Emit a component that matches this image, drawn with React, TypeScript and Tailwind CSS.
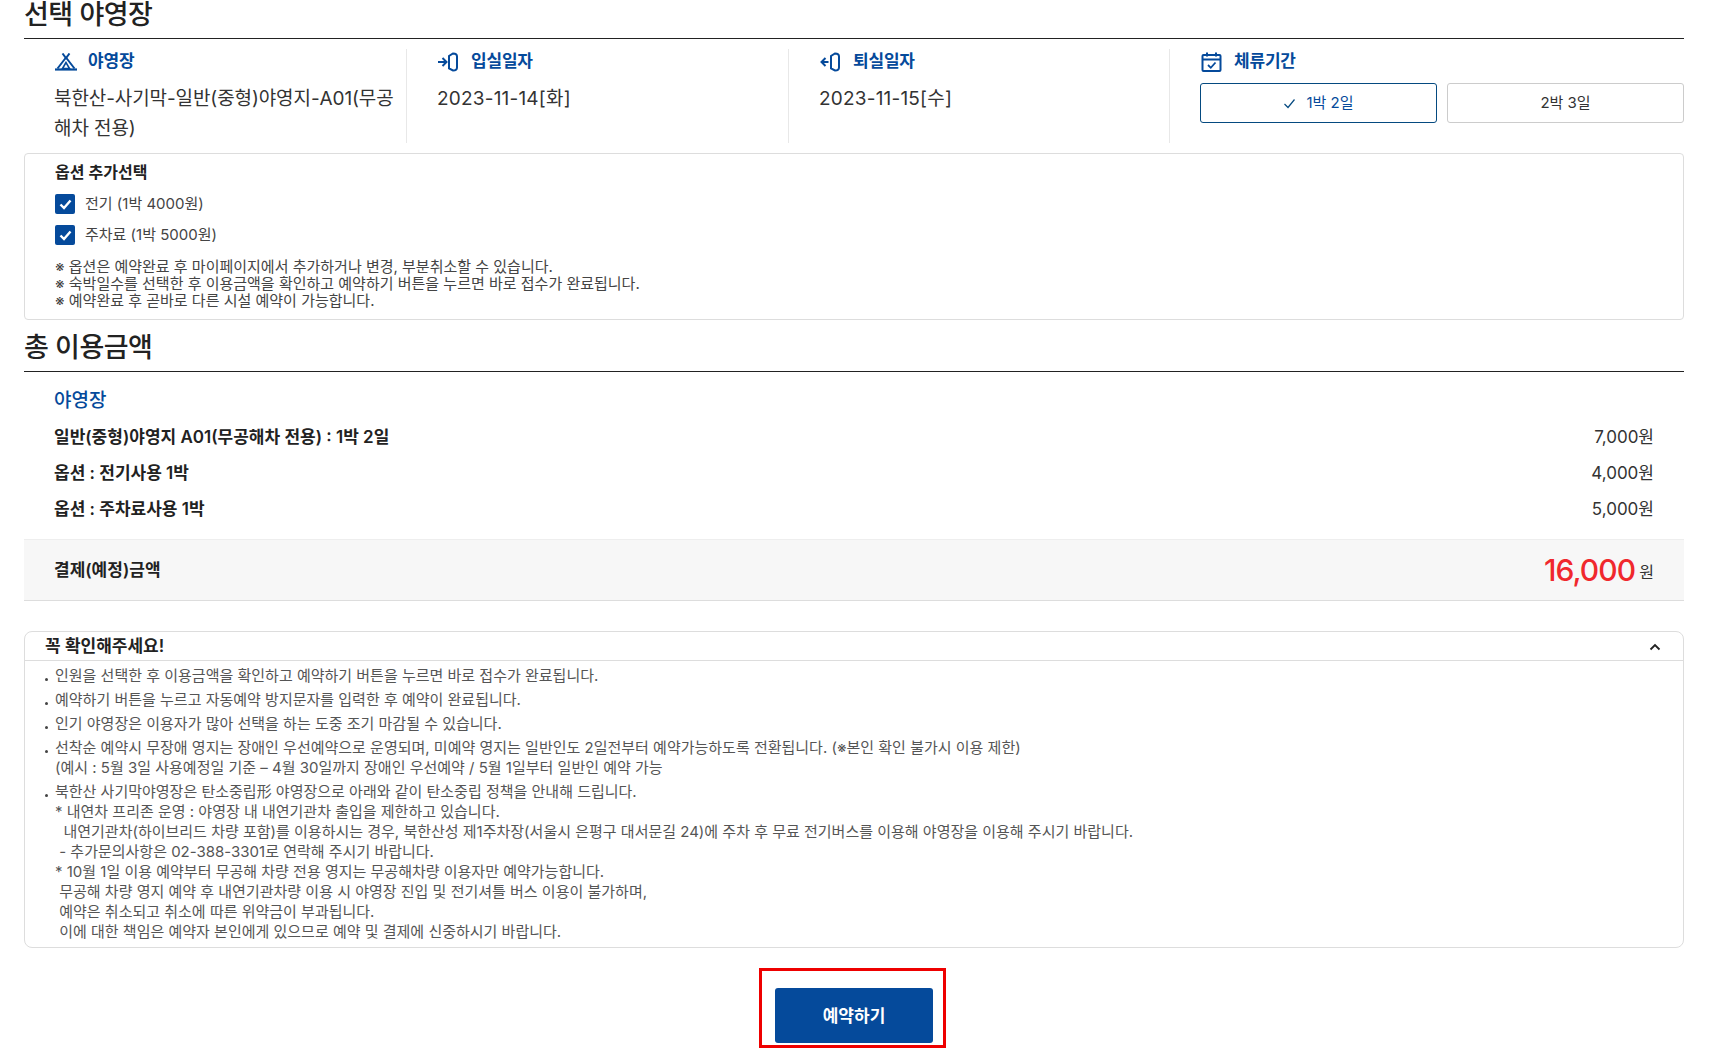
import React from "react";

function Tent() {
  return (
    <svg width="22" height="18" viewBox="0 0 22 18" fill="none" stroke="#054a9b" strokeWidth="2" className="ml-px shrink-0">
      <path d="M7.5 0.5 L11 5 L14.5 0.5" />
      <path d="M11 4.5 L2.5 15.5 M11 4.5 L19.5 15.5" />
      <path d="M0 16.5 H22" strokeWidth="2.2" />
      <path d="M11 9.5 L7.5 15.5 H14.5 Z" strokeWidth="1.6" />
    </svg>
  );
}

function Door({ out }: { out?: boolean }) {
  return (
    <svg width="22" height="20" viewBox="0 0 22 20" fill="none" stroke="#054a9b" strokeWidth="2" className="ml-px shrink-0">
      <path d="M11 4 V16.5 L15 18.5 C17.5 18.5 19 17.5 19 15.5 V4.5 C19 2.5 17.5 1.5 15 1.5 Z" />
      {out ? (
        <>
          <path d="M8.5 10 H1.5" />
          <path d="M5.5 6 L1.5 10 L5.5 14" />
        </>
      ) : (
        <>
          <path d="M0 10 H8" />
          <path d="M4.5 6 L8.5 10 L4.5 14" />
        </>
      )}
    </svg>
  );
}

function Calendar() {
  return (
    <svg width="21" height="20" viewBox="0 0 21 20" fill="none" stroke="#054a9b" strokeWidth="2" className="ml-px mr-px shrink-0">
      <rect x="1.5" y="3" width="18" height="16" rx="1" />
      <path d="M1.5 7.5 H19.5 M6 0.5 V4.5 M15 0.5 V4.5" />
      <path d="M7 13 L9.8 15.8 L14.5 10.5" strokeWidth="1.8" />
    </svg>
  );
}

function Head({ icon, label }: { icon: React.ReactNode; label: string }) {
  return (
    <div className="flex h-[26px] items-center gap-[11px] text-[17px] font-semibold tracking-[-0.2px] text-[#054a9b]">
      {icon}
      <span>{label}</span>
    </div>
  );
}

function Check({ label }: { label: string }) {
  return (
    <label className="flex h-5 items-center gap-[10px] text-[15px] text-[#444]">
      <span className="flex h-5 w-5 items-center justify-center rounded-[2px] bg-[#054a9b]">
        <svg width="13" height="11" viewBox="0 0 13 11" fill="none" stroke="white" strokeWidth="2.4">
          <path d="M1.5 5.5 L5 9 L11.5 1.5" />
        </svg>
      </span>
      {label}
    </label>
  );
}

function Row({ name, price }: { name: string; price: string }) {
  return (
    <div className="flex h-9 items-center justify-between">
      <span className="text-[17px] font-semibold text-[#222]">{name}</span>
      <span className="text-[17px] text-[#333]">{price}</span>
    </div>
  );
}

function Bullet({ children }: { children: React.ReactNode }) {
  return (
    <div className="relative mb-1 pl-[10px] whitespace-pre">
      <span className="absolute left-0 top-[12px] h-[3px] w-[3px] rounded-full bg-[#444]" />
      {children}
    </div>
  );
}

export default function App() {
  return (
    <div
      className="h-[1050px] w-[1715px] overflow-hidden bg-white pl-6 pr-[31px] text-[#222]"
      style={{ fontFamily: '"Inter", "Noto Sans CJK KR", sans-serif' }}
    >
      <h2 className="h-[39px] border-b border-[#222] text-[27px] font-medium leading-[29px] tracking-[-0.5px]">
        선택 야영장
      </h2>

      <div className="mt-[10px] flex h-[94px]">
        <div className="w-[383px] border-r border-[#e8e8e8] pl-[30px] pr-2">
          <Head icon={<Tent />} label="야영장" />
          <p className="mt-[9px] text-[19px] leading-[30px] tracking-[-0.1px] text-[#333]">
            북한산-사기막-일반(중형)야영지-A01(무공해차 전용)
          </p>
        </div>
        <div className="w-[382px] border-r border-[#e8e8e8] pl-[30px]">
          <Head icon={<Door />} label="입실일자" />
          <p className="mt-[9px] text-[19px] leading-[30px] tracking-[0.2px] text-[#333]">2023-11-14[화]</p>
        </div>
        <div className="w-[381px] border-r border-[#e8e8e8] pl-[30px]">
          <Head icon={<Door out />} label="퇴실일자" />
          <p className="mt-[9px] text-[19px] leading-[30px] tracking-[0.2px] text-[#333]">2023-11-15[수]</p>
        </div>
        <div className="flex-1 pl-[30px]">
          <Head icon={<Calendar />} label="체류기간" />
          <div className="mt-[8px] flex gap-[10px]">
            <button className="flex h-10 w-[237px] items-center justify-center gap-[10px] rounded-[3px] border border-[#054a80] bg-white text-[15px] text-[#054a9b]">
              <svg width="13" height="11" viewBox="0 0 13 11" fill="none" stroke="#054a80" strokeWidth="1.2">
                <path d="M1.5 6 L5 9.5 L11.5 1.5" />
              </svg>
              1박 2일
            </button>
            <button className="h-10 flex-1 rounded-[3px] border border-[#ccc] bg-white text-[15px] text-[#333]">
              2박 3일
            </button>
          </div>
        </div>
      </div>

      <div className="mt-[10px] h-[167px] rounded-[4px] border border-[#ddd] px-[30px] pt-[7px]">
        <h3 className="text-[16px] font-semibold leading-[22px] text-[#222]">옵션 추가선택</h3>
        <div className="mt-[11px] flex flex-col gap-[11px]">
          <Check label="전기 (1박 4000원)" />
          <Check label="주차료 (1박 5000원)" />
        </div>
        <div className="mt-[13px] text-[15px] leading-[17px] text-[#444]">
          <p>※ 옵션은 예약완료 후 마이페이지에서 추가하거나 변경, 부분취소할 수 있습니다.</p>
          <p>※ 숙박일수를 선택한 후 이용금액을 확인하고 예약하기 버튼을 누르면 바로 접수가 완료됩니다.</p>
          <p>※ 예약완료 후 곧바로 다른 시설 예약이 가능합니다.</p>
        </div>
      </div>

      <h2 className="mt-[9px] h-[43px] border-b border-[#222] text-[27px] font-medium leading-[38px] tracking-[-0.5px]">
        총 이용금액
      </h2>

      <div className="px-[30px] pt-[15px]">
        <h3 className="text-[19px] font-medium leading-[28px] text-[#054a9b]">야영장</h3>
        <div className="mt-[5px]">
          <Row name="일반(중형)야영지 A01(무공해차 전용) : 1박 2일" price="7,000원" />
          <Row name="옵션 : 전기사용 1박" price="4,000원" />
          <Row name="옵션 : 주차료사용 1박" price="5,000원" />
        </div>
      </div>

      <div className="mt-[11px] flex h-[62px] items-center justify-between border-y border-b-[#ddd] border-t-[#eee] bg-[#f7f7f7] px-[30px]">
        <span className="pt-[2px] text-[17px] font-semibold text-[#222]">결제(예정)금액</span>
        <span className="flex items-center gap-1 text-[16px] text-[#333]">
          <strong className="text-[30px] font-medium leading-none tracking-[-0.9px] text-[#f0282d]">16,000</strong>
          <span className="pt-[3px]">원</span>
        </span>
      </div>

      <div className="mt-[30px] h-[317px] rounded-[8px] border border-[#ddd]">
        <div className="flex h-[29px] items-center justify-between border-b border-[#ddd] pl-5 pr-[22px] pt-[2px]">
          <span className="text-[17px] font-semibold">꼭 확인해주세요!</span>
          <svg width="12" height="8" viewBox="0 0 12 8" fill="none" stroke="#222" strokeWidth="1.8">
            <path d="M1.5 6.5 L6 2 L10.5 6.5" />
          </svg>
        </div>
        <div className="pl-5 pt-[5px] text-[15px] leading-5 text-[#555]">
          <Bullet>인원을 선택한 후 이용금액을 확인하고 예약하기 버튼을 누르면 바로 접수가 완료됩니다.</Bullet>
          <Bullet>예약하기 버튼을 누르고 자동예약 방지문자를 입력한 후 예약이 완료됩니다.</Bullet>
          <Bullet>인기 야영장은 이용자가 많아 선택을 하는 도중 조기 마감될 수 있습니다.</Bullet>
          <Bullet>
            {"선착순 예약시 무장애 영지는 장애인 우선예약으로 운영되며, 미예약 영지는 일반인도 2일전부터 예약가능하도록 전환됩니다. (※본인 확인 불가시 이용 제한)\n(예시 : 5월 3일 사용예정일 기준 – 4월 30일까지 장애인 우선예약 / 5월 1일부터 일반인 예약 가능"}
          </Bullet>
          <Bullet>
            {"북한산 사기막야영장은 탄소중립形 야영장으로 아래와 같이 탄소중립 정책을 안내해 드립니다.\n* 내연차 프리존 운영 : 야영장 내 내연기관차 출입을 제한하고 있습니다.\n  내연기관차(하이브리드 차량 포함)를 이용하시는 경우, 북한산성 제1주차장(서울시 은평구 대서문길 24)에 주차 후 무료 전기버스를 이용해 야영장을 이용해 주시기 바랍니다.\n - 추가문의사항은 02-388-3301로 연락해 주시기 바랍니다.\n* 10월 1일 이용 예약부터 무공해 차량 전용 영지는 무공해차량 이용자만 예약가능합니다.\n 무공해 차량 영지 예약 후 내연기관차량 이용 시 야영장 진입 및 전기셔틀 버스 이용이 불가하며,\n 예약은 취소되고 취소에 따른 위약금이 부과됩니다.\n 이에 대한 책임은 예약자 본인에게 있으므로 예약 및 결제에 신중하시기 바랍니다."}
          </Bullet>
        </div>
      </div>

      <div className="mt-[20px] flex justify-center pr-[3px]">
        <div className="border-[3px] border-[#ee0000] pb-[2px] pl-[13px] pr-[10px] pt-[17px]">
          <button className="h-[55px] w-[158px] rounded-[3px] bg-[#054a9b] pt-[3px] text-[17px] font-semibold text-white">
            예약하기
          </button>
        </div>
      </div>
    </div>
  );
}
